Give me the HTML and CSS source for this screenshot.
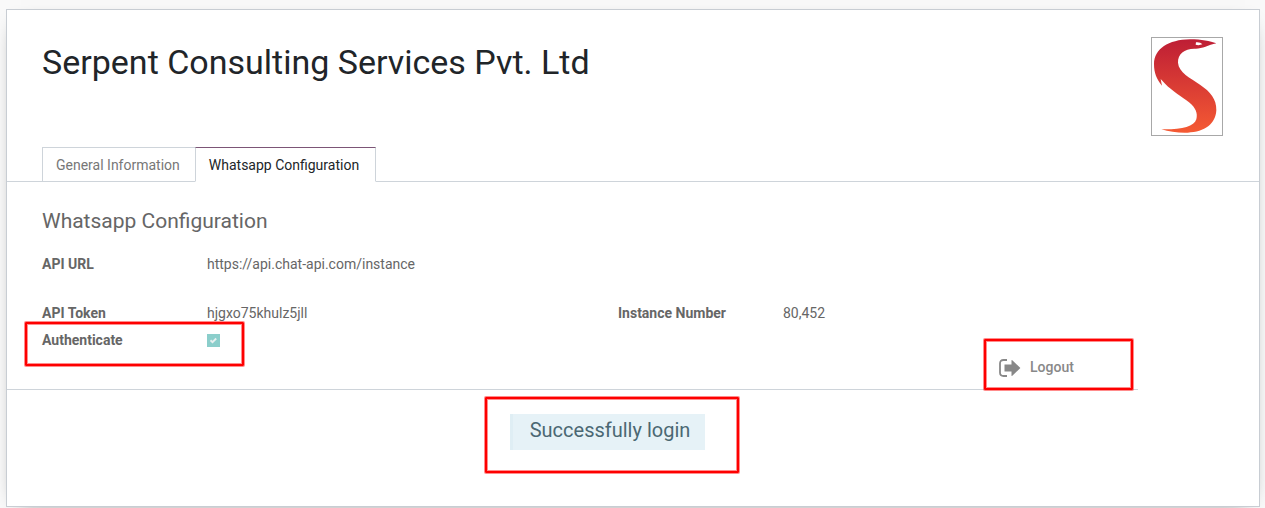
FILE: index.html
```
<!DOCTYPE html>
<html lang="en">
<head>
<meta charset="utf-8">
<meta name="viewport" content="width=device-width, initial-scale=1">
<title>Serpent Consulting Services Pvt. Ltd</title>
<link rel="stylesheet" href="styles.css">
</head>
<body>
<main class="sheet">
  <header class="sheet-header">
    <h1 class="title">Serpent Consulting Services Pvt. Ltd</h1>
    <svg class="logo" viewBox="36 30 210 291" role="img" aria-label="Company logo">
      <defs>
        <linearGradient id="snake" x1="0" y1="0" x2="0" y2="1">
          <stop offset="0" stop-color="#be1e35"/>
          <stop offset="1" stop-color="#f55a33"/>
        </linearGradient>
      </defs>
      <path fill="url(#snake)" fill-rule="evenodd" d="M229 46C210 39 185 34 150 34C85 35 43 63 42 108C42 134 50 154 66 173L62 153L76 168C94 187 128 208 147 223C167 239 174 256 169 274C162 297 125 305 64 304C88 311 115 315 143 314C195 312 227 287 229 247C230 213 211 191 180 170C151 150 116 133 114 104C113 78 133 62 163 62C184 64 203 52 229 46ZM168 43C176 42 183 44 187 49C180 52 172 52 167 50Z"/>
    </svg>
  </header>

  <div class="tabs" role="tablist">
    <button class="tab" type="button" role="tab" aria-selected="false">General Information</button>
    <button class="tab tab-active" type="button" role="tab" aria-selected="true">Whatsapp Configuration</button>
  </div>

  <section class="panel">
    <h2 class="group-title">Whatsapp Configuration</h2>
    <dl class="fields">
      <div class="field field-wide"><dt>API URL</dt><dd>https://api.chat-api.com/instance</dd></div>
      <div class="field"><dt>API Token</dt><dd>hjgxo75khulz5jll</dd></div>
      <div class="field"><dt>Instance Number</dt><dd>80,452</dd></div>
    </dl>
    <div class="authenticate">
      <label class="check-label" for="authenticate">Authenticate</label>
      <span class="check">
        <input class="check-input" id="authenticate" type="checkbox" checked disabled>
        <svg class="check-mark" viewBox="0 0 13 13" aria-hidden="true"><path d="M3.500 6.300L5.500 8.200L9.200 4.500" fill="none" stroke="#e8f0f0" stroke-width="1.900"/></svg>
      </span>
      <span class="highlight highlight-auth"></span>
    </div>
  </section>

  <div class="actions">
    <div class="logout-wrap">
      <button class="logout" type="button">
        <svg class="logout-icon" viewBox="0 0 22 18" aria-hidden="true">
          <path d="M8 1H4.500Q1 1 1 4.500V13.500Q1 17 4.500 17H8" fill="none" stroke="#888" stroke-width="1.800"/>
          <path d="M5.500 5.500H12.500V1.500Q12.600 .600 13.300 1.200L21.400 9L13.300 16.800Q12.600 17.400 12.500 16.500V12.500H5.500Z" fill="#888"/>
        </svg>
        Logout
      </button>
      <span class="highlight highlight-logout"></span>
    </div>
  </div>

  <div class="status">
    <div class="status-wrap">
      <p class="message" role="status">Successfully login</p>
      <span class="highlight highlight-status"></span>
    </div>
  </div>
</main>
</body>
</html>
```
FILE: styles.css
```
* {
  box-sizing: border-box;
}

body {
  margin: 0;
  padding: 9px 5px 1px 6px;
  background: #f9f9f9;
  color: #666;
  font: 14px/21px Roboto, "Liberation Sans", sans-serif;
}

h1, h2, p, dl, dd {
  margin: 0;
}

.sheet {
  padding-bottom: 56px;
  border: 1px solid #c8cdd3;
  background: #fff;
  box-shadow: 0 5px 20px -15px #000;
}

.sheet-header {
  display: flex;
  justify-content: space-between;
  align-items: flex-start;
  padding: 27px 36px 11px 35px;
}

.title {
  padding-top: 4px;
  color: #212529;
  font-size: 34px;
  font-weight: 400;
  line-height: 43px;
}

.logo {
  flex: none;
  width: 72px;
  height: 99px;
  border: 1px solid #a8a8a8;
}

.tabs {
  display: flex;
  padding-left: 35px;
  border-bottom: 1px solid #ced4da;
}

.tab {
  height: 35px;
  margin: 0 0 -1px;
  padding: 2px 15px 0 13px;
  border: 1px solid #ced4da;
  background: #fff;
  color: #777;
  font: inherit;
}

.tab-active {
  margin-left: -1px;
  padding-right: 16px;
  border-top-color: #7c5576;
  border-bottom-color: #fff;
  color: #212529;
}

.panel {
  padding: 24px 35px 0;
}

.group-title {
  font-size: 21px;
  font-weight: 400;
  line-height: 30px;
}

.fields {
  display: grid;
  grid-template-columns: 576px 1fr;
  row-gap: 28px;
  padding-top: 18px;
}

.field {
  display: grid;
  grid-template-columns: 165px 1fr;
}

.field-wide {
  grid-column: 1 / -1;
}

.field dt,
.check-label {
  font-weight: 700;
}

.authenticate {
  position: relative;
  display: grid;
  grid-template-columns: 165px 1fr;
  align-items: center;
  padding-top: 6px;
}

.check {
  display: grid;
  width: 13px;
  height: 13px;
}

.check-input,
.check-mark {
  grid-area: 1 / 1;
  width: 13px;
  height: 13px;
  margin: 0;
}

.check-input {
  appearance: none;
  background: #8bcecb;
}

.actions {
  display: flex;
  justify-content: flex-end;
  width: calc(100% - 121px);
  padding-top: 6px;
  border-bottom: 1px solid #ced4da;
}

.logout-wrap {
  position: relative;
  width: 139px;
  padding-bottom: 11px;
}

.logout {
  display: flex;
  align-items: center;
  gap: 9px;
  padding: 0;
  border: 0;
  background: none;
  color: #888;
  font: inherit;
  font-weight: 500;
}

.logout-icon {
  width: 22px;
  height: 18px;
}

.status {
  display: flex;
  justify-content: center;
  padding: 24px 51px 0 0;
}

.status-wrap {
  position: relative;
}

.message {
  padding: 0 15px 3px 17px;
  border-left: 3px solid #dfeef4;
  background: #e6f2f7;
  color: #4b6873;
  font-size: 20px;
  line-height: 33px;
}

.highlight {
  position: absolute;
  border: 2px solid #fe0000;
  border-radius: 1px;
  box-shadow: 0 0 0 1px rgba(255, 0, 0, .45), inset 0 0 0 1px rgba(255, 0, 0, .45);
  pointer-events: none;
}

.highlight-auth {
  top: -2px;
  left: -17px;
  width: 219px;
  height: 44px;
}

.highlight-logout {
  top: -18px;
  left: -15px;
  width: 149px;
  height: 51px;
}

.highlight-status {
  top: -17px;
  left: -25px;
  width: 254px;
  height: 76px;
}
```
